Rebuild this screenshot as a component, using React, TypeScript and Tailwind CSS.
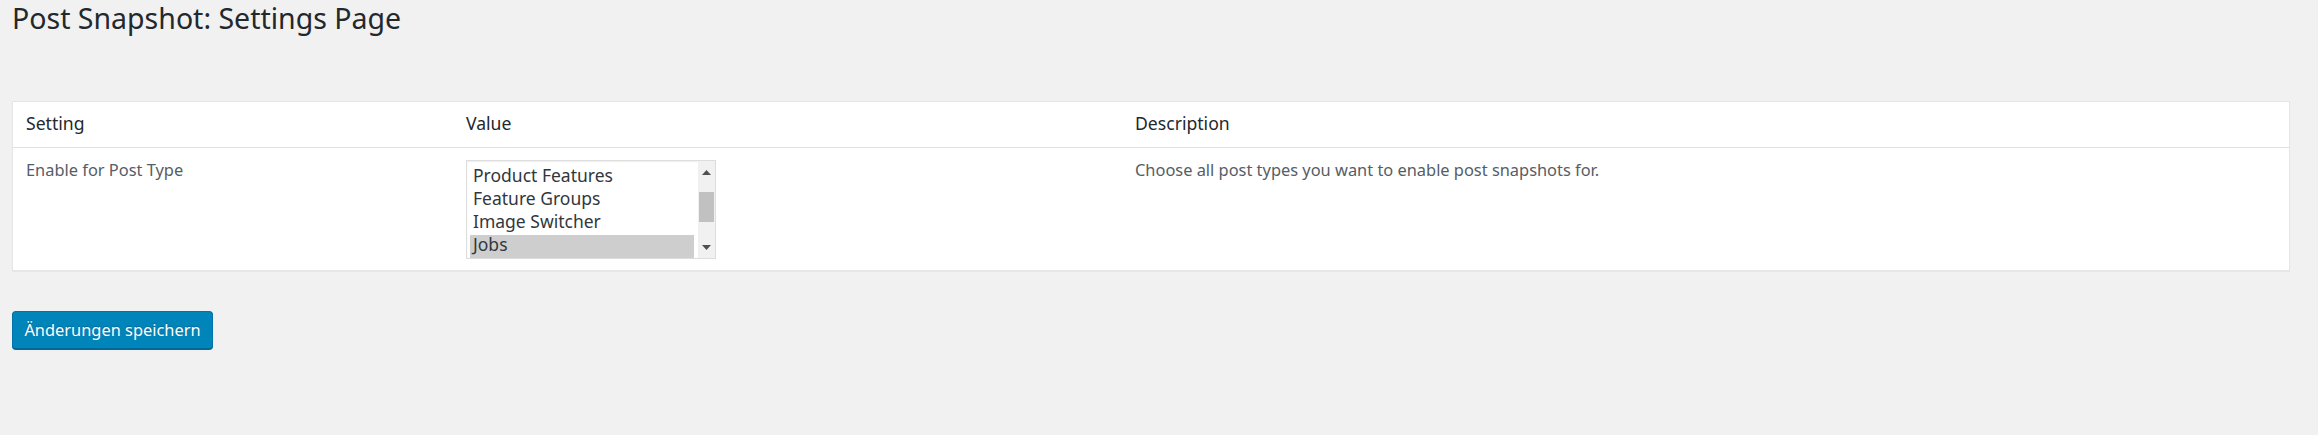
const OPTIONS = ["Product Features", "Feature Groups", "Image Switcher", "Jobs"];

function ListBox() {
  return (
    <div className="flex h-[99px] w-[250px] border border-[#dddddd] bg-white shadow-[inset_0_1px_2px_rgba(0,0,0,0.07)]">
      <div className="flex-1 pl-[3px] pr-[4px] pt-[5px]">
        {OPTIONS.map((o) => (
          <div
            key={o}
            className={
              "h-[23px] pl-[3px] text-[17.5px] leading-[18px] text-[#32373c] " +
              (o === "Jobs" ? "bg-[#cecece]" : "")
            }
          >
            {o}
          </div>
        ))}
      </div>
      {/* scrollbar */}
      <div className="flex w-[17px] flex-col items-center bg-[#f1f1f1]">
        <div className="flex h-[22px] items-center justify-center">
          <svg width="9" height="5" viewBox="0 0 9 5">
            <path d="M0 5 L4.5 0 L9 5 Z" fill="#505050" />
          </svg>
        </div>
        <div className="mt-[9px] h-[30px] w-[15px] bg-[#c1c1c1]" />
        <div className="flex-1" />
        <div className="flex h-[22px] items-center justify-center">
          <svg width="9" height="5" viewBox="0 0 9 5">
            <path d="M0 0 L9 0 L4.5 5 Z" fill="#505050" />
          </svg>
        </div>
      </div>
    </div>
  );
}

export default function App() {
  return (
    <div
      className="min-h-screen bg-[#f1f1f1] pl-3 pr-[28px] text-[#23282d]"
      style={{ fontFamily: '"Noto Sans", "DejaVu Sans", sans-serif' }}
    >
      <h1 className="text-[28.5px] font-normal leading-[36px] text-[#23282d]">
        Post Snapshot: Settings Page
      </h1>

      {/* Settings table */}
      <div className="mt-[65px] border border-[#e5e5e5] bg-white shadow-[0_1px_1px_rgba(0,0,0,0.04)]">
        <div className="grid grid-cols-[440px_669px_1fr] border-b border-[#e1e1e1]">
          <div className="pl-[13px] pt-[9px] pb-[11px] text-[17.6px] leading-[25px]">Setting</div>
          <div className="pl-[13px] pt-[9px] pb-[11px] text-[17.6px] leading-[25px]">Value</div>
          <div className="pl-[13px] pt-[9px] pb-[11px] text-[17.6px] leading-[25px]">Description</div>
        </div>
        <div className="grid grid-cols-[440px_669px_1fr] text-[16.4px] leading-[20px] text-[#555d66]">
          <div className="pl-[13px] py-[12px]">Enable for Post Type</div>
          <div className="pl-[13px] pt-[12px] pb-[11px]">
            <ListBox />
          </div>
          <div className="pl-[13px] py-[12px]">
            Choose all post types you want to enable post snapshots for.
          </div>
        </div>
      </div>

      <button className="mt-[40px] h-[38px] w-[201px] whitespace-nowrap rounded-[4px] border border-[#0073aa] border-b-[#006799] bg-[#0085ba] text-center text-[16.4px] text-white shadow-[0_1px_0_#006799] [text-shadow:0_-1px_1px_#006799]">
        Änderungen speichern
      </button>
    </div>
  );
}
